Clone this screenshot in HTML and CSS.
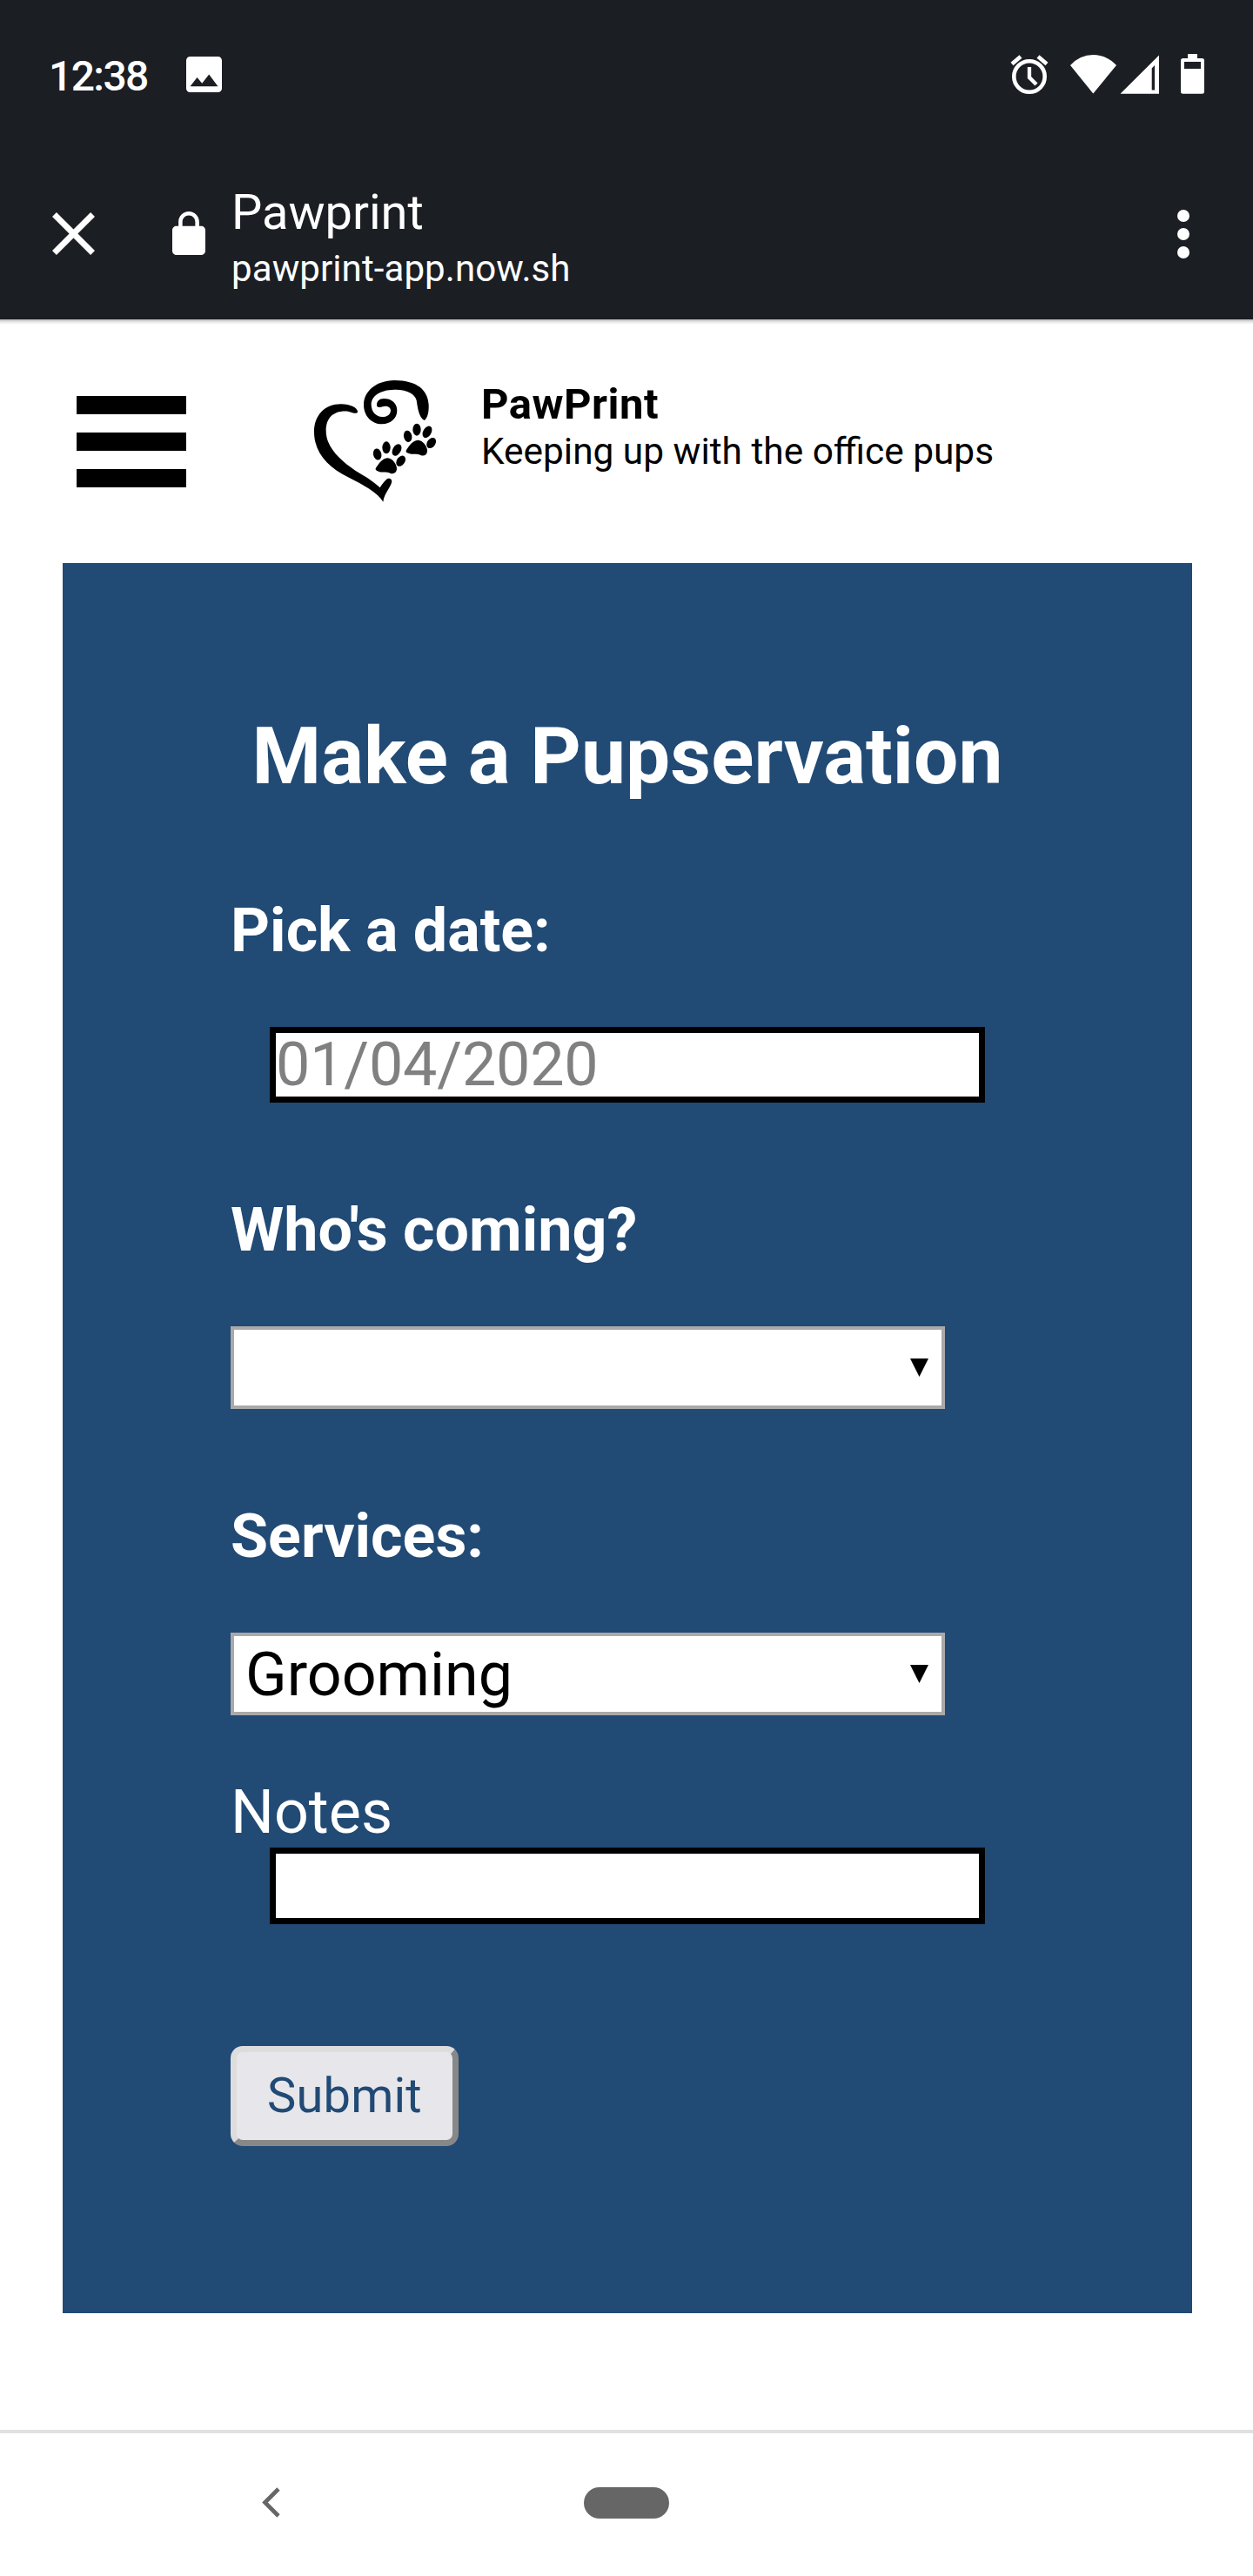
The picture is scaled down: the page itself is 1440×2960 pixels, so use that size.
FILE: index.html
```
<!DOCTYPE html>
<html lang="en">
<head>
<meta charset="utf-8">
<title>Pawprint</title>
<link rel="stylesheet" href="styles.css">
</head>
<body>
<header class="chrome">
  <div class="status">
    <span class="clock">12:38</span>
    <svg class="picture" viewBox="3 3 18 18"><path fill="#fff" d="M21 19V5c0-1.100-.9-2-2-2H5c-1.100 0-2 .9-2 2v14c0 1.100.9 2 2 2h14c1.100 0 2-.9 2-2zM8.500 13.500l2.500 3.010L14.500 12l4.500 6H5l3.500-4.500z"/></svg>
    <svg class="indicators" viewBox="0 0 230 50">
      <g fill="none" stroke="#fff">
        <circle cx="28" cy="28" r="17.700" stroke-width="4.600"/>
        <path d="M28 17v12l8 8" stroke-width="4.300"/>
        <path d="M8 13.500l10-8.500M48 13.500L38 5" stroke-width="4.600"/>
      </g>
      <g fill="#fff">
        <path d="M75 15Q86 3 101.300 3T128 15L101.300 47.500z"/>
        <path fill-rule="evenodd" d="M132.500 47.700L177 3.500V47.700zM168.700 18.500V43.500H172V15z"/>
        <path fill-rule="evenodd" d="M210 2h11v5h5.500q2.500 0 2.500 2.500v35.700q0 2.500-2.500 2.500h-22q-2.500 0-2.500-2.500V9.500q0-2.500 2.500-2.500h5.500zM206 11v8h19v-8z"/>
      </g>
    </svg>
  </div>
  <div class="toolbar">
    <svg class="close" viewBox="5 5 14 14"><path fill="#fff" d="M19 6.410L17.590 5 12 10.590 6.410 5 5 6.410 10.590 12 5 17.590 6.410 19 12 13.410 17.590 19 19 17.590 13.410 12z"/></svg>
    <svg class="lock" viewBox="4 1 16 21"><path fill="#fff" d="M18 8h-1V6c0-2.760-2.240-5-5-5S7 3.240 7 6v2H6c-1.100 0-2 .9-2 2v10c0 1.100.9 2 2 2h12c1.100 0 2-.9 2-2V10c0-1.100-.9-2-2-2zM8.900 8V6c0-1.710 1.390-3.100 3.100-3.100s3.100 1.390 3.100 3.100v2z"/></svg>
    <div class="page-info">
      <div class="page-title">Pawprint</div>
      <div class="page-url">pawprint-app.now.sh</div>
    </div>
    <div class="more"><i></i><i></i><i></i></div>
  </div>
</header>

<div class="site-header">
  <div class="burger"><i></i><i></i><i></i></div>
  <svg class="logo" viewBox="0 0 540 510">
    <path d="M213 158C212 147 190 133 155 133C100 133 63 172 63 228C63 300 110 350 180 385C235 413 280 437 301 470C304 440 331 415 331 398C329 387 318 387 312 393C303 402 295 412 290 421C262 395 235 380 205 362C150 325 104 280 104 225C104 180 130 154 180 158C200 165 213 168 213 158z"/>
    <path d="M443 189C454 182 459 160 458 135C455 85 420 52 340 51C275 52 234 90 234 135C234 175 262 202 297 202C327 201 349 182 349 155C349 128 328 114 304 114C287 114 278 124 279 138C280 145 290 145 299 142C312 138 326 142 327 155C326 170 314 177 298 177C275 176 261 160 260 135C260 105 290 84 340 83C385 82 412 100 416 120C420 145 424 180 443 189z"/>
    <g id="paw">
      <ellipse cx="281" cy="306" rx="14" ry="20" transform="rotate(-12 281 306)"/>
      <ellipse cx="312" cy="283" rx="14" ry="21"/>
      <ellipse cx="348" cy="291" rx="14" ry="22" transform="rotate(30 348 291)"/>
      <ellipse cx="362" cy="329" rx="14" ry="20" transform="rotate(35 362 329)"/>
      <path d="M275 355C285 340 295 322 316 319C335 320 350 345 348 358C346 372 335 375 325 371C310 364 300 370 285 365C277 363 274 360 275 355z"/>
    </g>
    <use href="#paw" x="105" y="-62"/>
  </svg>
  <div class="brand">
    <div class="brand-name">PawPrint</div>
    <div class="brand-tag">Keeping up with the office pups</div>
  </div>
</div>

<form class="panel">
  <h2 class="title">Make a Pupservation</h2>
  <label class="label" for="date">Pick a date:</label>
  <input class="field" id="date" type="text" placeholder="01/04/2020">
  <label class="label spaced" for="who">Who's coming?</label>
  <div class="picker"><select class="select" id="who"><option></option></select></div>
  <label class="label spaced" for="service">Services:</label>
  <div class="picker"><select class="select" id="service"><option>Grooming</option></select></div>
  <label class="label notes" for="notes">Notes</label>
  <input class="field tall" id="notes" type="text">
  <button class="submit" type="button">Submit</button>
</form>

<nav class="navbar">
  <svg class="back" viewBox="0 0 21 35"><path d="M19 2L3.500 17.500L19 33" fill="none" stroke="#666" stroke-width="4.700"/></svg>
  <div class="home"></div>
</nav>
</body>
</html>
```
FILE: styles.css
```
* { box-sizing: border-box; }
body {
  margin: 0;
  width: 1440px;
  height: 2960px;
  display: flex;
  flex-direction: column;
  background: #fff;
  font-family: Roboto, "Liberation Sans", sans-serif;
  overflow: hidden;
}
svg { display: block; flex: none; }

.chrome { height: 367px; background: #1b1e23; color: #fff; flex: none; }
.status { height: 176px; display: flex; align-items: flex-start; padding-left: 56px; }
.clock { width: 158px; font-size: 48px; font-weight: 500; line-height: 56px; margin-top: 60px; letter-spacing: -1.6px; }
.picture { width: 41px; height: 41px; margin-top: 65px; }
.indicators { width: 230px; height: 50px; margin: 60px 55px 0 auto; }

.toolbar { height: 191px; display: flex; align-items: flex-start; padding-left: 60px; }
.close { width: 49px; height: 49px; margin-top: 68px; }
.lock { width: 38px; height: 50px; margin: 67px 30px 0 89px; }
.page-info { margin-top: 35px; }
.page-title { font-size: 56px; line-height: 66px; }
.page-url { font-size: 42px; line-height: 50px; margin-top: 7px; letter-spacing: 0.1px; }
.more { margin: 65px 73px 0 auto; display: flex; flex-direction: column; gap: 7px; }
.more i { width: 14px; height: 14px; border-radius: 50%; background: #fff; }

.site-header {
  height: 280px;
  flex: none;
  display: flex;
  align-items: flex-start;
  padding-left: 88px;
  background: linear-gradient(#b8b8b8, #e8e8e8 3px, #fff 6px);
}
.burger { width: 126px; margin-top: 88px; display: flex; flex-direction: column; gap: 21px; }
.burger i { height: 21px; background: #000; }
.logo { width: 180px; height: 170px; margin: 53px 33px 0 126px; }
.brand { color: #000; margin-top: 70px; }
.brand-name { font-size: 49px; font-weight: 700; line-height: 56px; letter-spacing: 0.5px; }
.brand-tag { font-size: 42.400px; line-height: 50px; margin-top: 1px; }

.panel {
  width: 1298px;
  height: 2011px;
  flex: none;
  margin-left: 72px;
  padding: 169px 193px 0;
  background: #214a75;
  color: #fff;
  display: flex;
  flex-direction: column;
  align-items: flex-start;
}
.title { margin: 0 0 105px; align-self: center; font-size: 91px; line-height: 107px; letter-spacing: 0.1px; white-space: nowrap; }
.label { font-size: 70px; font-weight: 700; line-height: 82px; margin-bottom: 70px; }
.spaced { margin-top: 105px; }
.notes { font-weight: 400; margin: 70px 0 0; }
.field {
  width: 822px;
  height: 87px;
  margin: 0 0 0 45px;
  padding: 0 0 2px;
  border: 7px solid #000;
  border-radius: 0;
  background: #fff;
  font: 70px Roboto, sans-serif;
  letter-spacing: -0.2px;
}
.field::placeholder { color: #808080; opacity: 1; }
.tall { height: 88px; }
.picker { position: relative; width: 821px; height: 95px; }
.picker::after {
  content: "";
  position: absolute;
  right: 19px;
  top: 37px;
  width: 21px;
  height: 21px;
  background: #000;
  clip-path: polygon(0 0, 100% 0, 50% 100%);
}
.select {
  appearance: none;
  width: 100%;
  height: 100%;
  margin: 0;
  padding: 0 0 0 13px;
  border: 4px solid #a9a9a9;
  border-radius: 0;
  background: #fff;
  color: #000;
  font: 70px Roboto, sans-serif;
}
.submit {
  width: 262px;
  height: 115px;
  margin-top: 140px;
  padding: 0 0 2px;
  border: 7px solid;
  border-color: #ddd #888 #888 #ddd;
  border-radius: 14px;
  background: #e7e7eb;
  color: #214a75;
  font: 56px Roboto, sans-serif;
  letter-spacing: 0.2px;
}

.navbar {
  height: 168px;
  margin-top: 134px;
  flex: none;
  border-top: 4px solid #e0e0e0;
  display: flex;
  align-items: flex-start;
  padding: 62px 0 0 301px;
}
.back { width: 21px; height: 35px; }
.home { width: 98px; height: 36px; margin-left: 349px; border-radius: 18px; background: #666; }
```
